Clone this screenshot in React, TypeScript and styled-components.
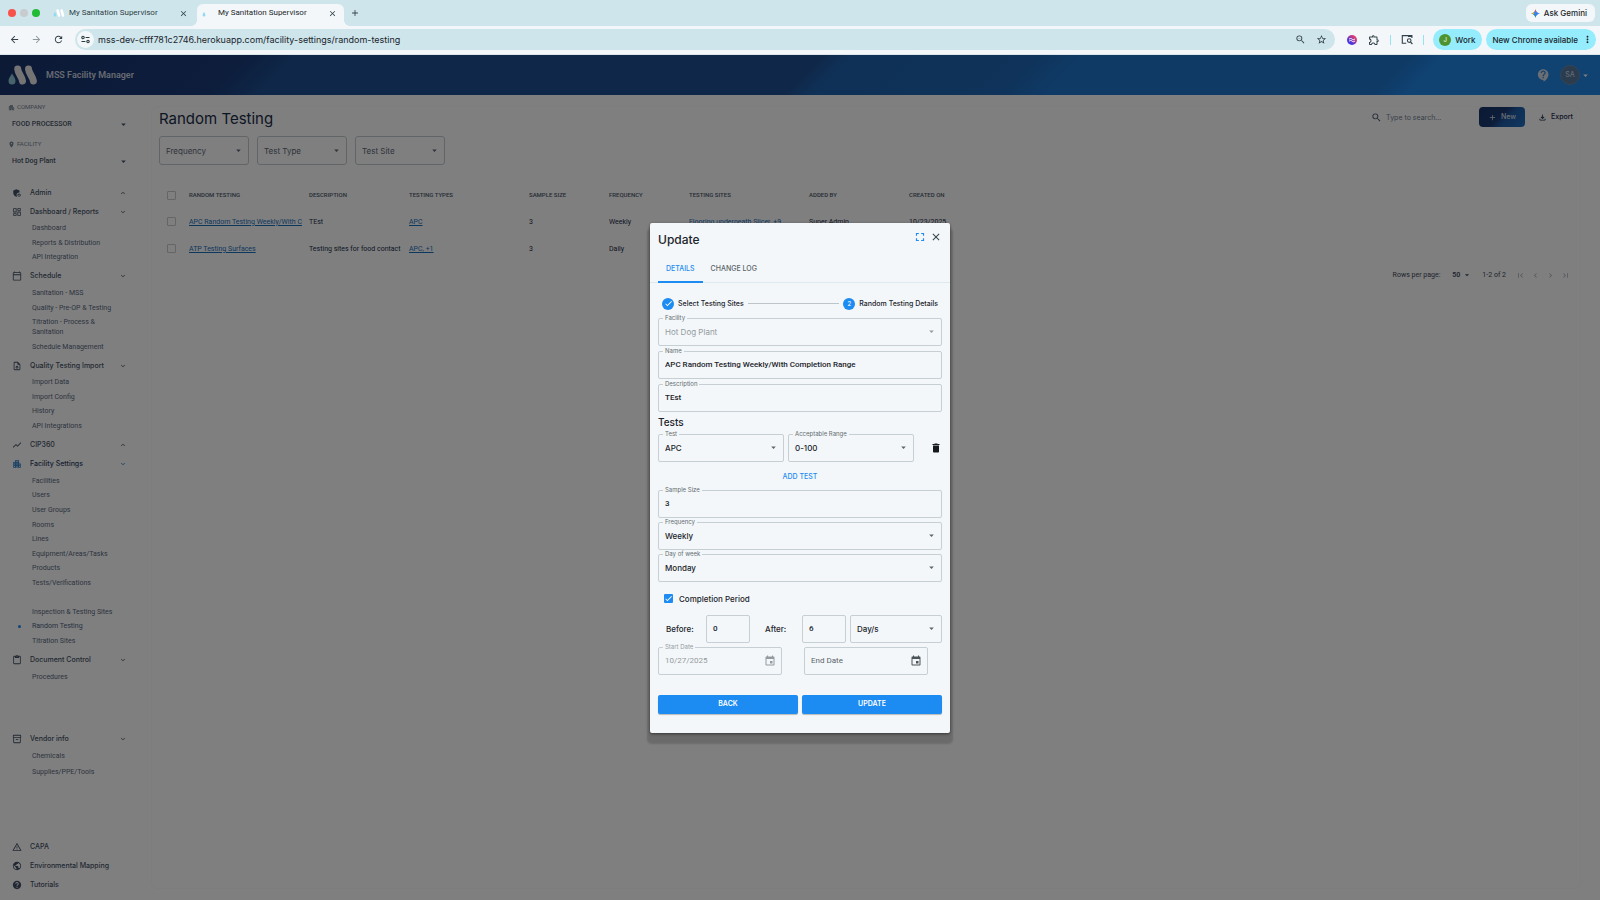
import React from "react";
import styled, { createGlobalStyle, css } from "styled-components";
import {
  MdAdminPanelSettings,
  MdAdd,
  MdApartment,
  MdArrowBack,
  MdArrowDropDown,
  MdArrowForward,
  MdCheck,
  MdChevronLeft,
  MdChevronRight,
  MdClose,
  MdContactSupport,
  MdContentPaste,
  MdDelete,
  MdEvent,
  MdFirstPage,
  MdFullscreen,
  MdHelp,
  MdKeyboardArrowDown,
  MdKeyboardArrowUp,
  MdLastPage,
  MdMoreVert,
  MdOutlineCalendarToday,
  MdOutlineDashboard,
  MdOutlineExtension,
  MdOutlineFileDownload,
  MdOutlineInventory2,
  MdOutlineUploadFile,
  MdPlace,
  MdPublic,
  MdRefresh,
  MdSearch,
  MdShowChart,
  MdStarBorder,
  MdWarningAmber,
  MdZoomOut,
} from "react-icons/md";

const blue = "#1c8bf2";
const paper = "#f3f7f9";
const tint = "#cde5eb";
const navy = "#1a2c48";
const slate = "#445266";

const Global = createGlobalStyle`
  *, *::before, *::after { box-sizing: border-box; }
  body { margin: 0; font-family: Inter, Roboto, sans-serif; font-size: 8px; line-height: 10px; color: #1c242b; background: #fff; }
  button, input, select { font: inherit; color: inherit; margin: 0; padding: 0; border: 0; background: none; }
  button { cursor: pointer; }
  ul { list-style: none; margin: 0; padding: 0; }
  h1, h2, h3, p { margin: 0; }
  a { color: inherit; text-decoration: none; }
  svg { display: block; flex: none; }
`;

const Page = styled.div`
  min-height: 100vh;
  display: flex;
  flex-direction: column;
`;

/* ---------- browser chrome ---------- */

const TabStrip = styled.header`
  height: 26px;
  display: flex;
  align-items: center;
  padding: 0 5px 0 8px;
  background: ${tint};
`;

const Lights = styled.div`
  display: flex;
  gap: 4px;
  margin-right: 4px;
`;

const Light = styled.span<{ $c: string }>`
  width: 8px;
  height: 8px;
  border-radius: 50%;
  background: ${(p) => p.$c};
`;

const Tab = styled.div<{ $active?: boolean }>`
  position: relative;
  width: 147px;
  height: 22px;
  margin: 4px 2px 0;
  padding: ${(p) => (p.$active ? "0 7px 4px 5px" : "0 5px 4px 7px")};
  display: flex;
  align-items: center;
  font-family: Roboto, sans-serif;
  color: #2f3e45;
  ${(p) =>
    p.$active &&
    css`
      background: ${paper};
      border-radius: 6px 6px 0 0;
      color: #1c262b;
      &::before,
      &::after {
        content: "";
        position: absolute;
        bottom: 0;
        width: 6px;
        height: 6px;
      }
      &::before {
        right: 100%;
        background: radial-gradient(circle at 0 0, transparent 6px, ${paper} 6px);
      }
      &::after {
        left: 100%;
        background: radial-gradient(circle at 100% 0, transparent 6px, ${paper} 6px);
      }
    `}
`;

const TabTitle = styled.span`
  flex: 1;
  margin-left: 4px;
`;

const IconButton = styled.button<{ $size?: number; $c?: string }>`
  display: inline-flex;
  align-items: center;
  justify-content: center;
  width: ${(p) => p.$size ?? 12}px;
  height: ${(p) => p.$size ?? 12}px;
  color: ${(p) => p.$c ?? "#33424a"};
  flex: none;
`;

const NewTab = styled(IconButton)`
  margin-left: 3px;
`;

const Gemini = styled.button`
  margin-left: auto;
  height: 18px;
  padding: 0 8px 0 5px;
  display: flex;
  align-items: center;
  gap: 4px;
  border-radius: 6px;
  background: ${paper};
  font-weight: 500;
`;

const Toolbar = styled.nav`
  height: 29px;
  display: flex;
  align-items: center;
  padding: 0 4px 1px 8px;
  background: ${paper};
  border-bottom: 1px solid #dbe6ea;
`;

const NavButtons = styled.div`
  display: flex;
  gap: 10px;
  margin-right: 11px;
`;

const Address = styled.div`
  flex: 1;
  height: 21px;
  padding: 0 8px 0 2px;
  display: flex;
  align-items: center;
  gap: 4px;
  border-radius: 11px;
  background: ${tint};
`;

const SiteInfo = styled(IconButton)`
  border-radius: 50%;
  background: ${paper};
`;

const Url = styled.input`
  flex: 1;
  min-width: 0;
  height: 17px;
  font-size: 9px;
  outline: 0;
`;

const AddressIcons = styled.div`
  display: flex;
  gap: 9px;
`;

const Extensions = styled.div`
  display: flex;
  align-items: center;
  gap: 10px;
  margin: 0 9px 0 11px;
`;

const Separator = styled.span`
  width: 1px;
  height: 10px;
  background: #94e3f5;
`;

const Pill = styled.button`
  height: 21px;
  display: flex;
  align-items: center;
  gap: 4px;
  padding: 0 3px 0 6px;
  margin-left: 4px;
  border-radius: 11px;
  background: #94ecfc;
  font-weight: 500;
  white-space: nowrap;
`;

const WorkPill = styled(Pill)`
  margin-left: 0;
  padding: 0 7px 0 6px;
`;

const Initial = styled.span`
  width: 12px;
  height: 12px;
  border-radius: 50%;
  background: #4d9430;
  color: #e6f2df;
  font-size: 6px;
  line-height: 12px;
`;

/* ---------- application frame ---------- */

const AppFrame = styled.div`
  position: relative;
  flex: 1;
  display: flex;
  flex-direction: column;
`;

const AppBar = styled.div`
  height: 40px;
  display: flex;
  align-items: center;
  padding: 0 9px 0 8px;
  color: #fff;
  background: linear-gradient(
    135deg,
    #18346c 0,
    #1a3a78 15%,
    #1e4e90 18%,
    #1e4e90 50%,
    #1e62ae 52%,
    #1e66b4 63%,
    #1e74ca 66%,
    #1e74ca 86%,
    #2084e4 88%
  );
`;

const AppName = styled.span`
  flex: 1;
  margin-left: 8px;
  font-family: Roboto, sans-serif;
  font-size: 9px;
  line-height: 12px;
  font-weight: 600;
  color: #ccd4e0;
`;

const Avatar = styled.span`
  width: 20px;
  height: 20px;
  margin-left: 10px;
  border-radius: 50%;
  background: #55789c;
  border: 1px solid #6489ab;
  color: #c5d5e4;
  font-size: 7px;
  font-weight: 500;
  line-height: 18px;
  text-align: center;
`;

const Columns = styled.div`
  flex: 1;
  display: flex;
`;

const Sidebar = styled.aside`
  width: 140px;
  flex: none;
  display: flex;
  flex-direction: column;
  padding: 7px 7px 5px;
  color: ${slate};
`;

const Picker = styled.div`
  display: flex;
  flex-direction: column;
  gap: 1px;
  height: 37px;
`;

const PickerLabel = styled.label`
  display: flex;
  align-items: center;
  gap: 2px;
  height: 10px;
  padding-left: 1px;
  font-family: Roboto, sans-serif;
  font-size: 6px;
  text-transform: uppercase;
  color: #748294;
`;

const SelectBox = styled.div`
  position: relative;
  display: flex;
  align-items: center;
  width: 100%;
  height: 100%;
  svg {
    position: absolute;
    right: 4px;
    pointer-events: none;
  }
`;

const NativeSelect = styled.select`
  appearance: none;
  width: 100%;
  height: 100%;
  outline: 0;
  opacity: 1;
`;

const PickerSelect = styled(SelectBox)`
  height: 22px;
  font-family: Roboto, sans-serif;
  font-size: 7px;
  font-weight: 500;
  select {
    padding-left: 5px;
  }
`;

const Menu = styled.ul`
  flex: 1;
  display: flex;
  flex-direction: column;
  margin-top: 7px;
`;

const Group = styled.li<{ $grow: number }>`
  flex: ${(p) => p.$grow} 0 auto;
  display: flex;
  flex-direction: column;
  padding-right: 6px;
`;

const GroupHead = styled.button<{ $active?: boolean }>`
  height: 19px;
  display: flex;
  align-items: center;
  gap: 8px;
  padding: 0 0 0 5px;
  font-size: 7px;
  font-weight: 500;
  text-align: left;
  color: ${(p) => (p.$active ? "#2d4263" : slate)};
  svg {
    color: ${(p) => (p.$active ? "#2b7cc8" : slate)};
  }
`;

const GroupTitle = styled.span`
  flex: 1;
`;

const SubList = styled.ul`
  flex: 1;
  display: flex;
  flex-direction: column;
  padding: 0 0 2px;
`;

const SubItem = styled.li<{ $current?: boolean }>`
  position: relative;
  flex: 1 0 auto;
  min-height: 14px;
  display: flex;
  align-items: center;
  padding: 2px 0 2px 25px;
  max-width: 116px;
  font-family: Roboto, sans-serif;
  font-size: 7px;
  color: ${(p) => (p.$current ? "#4a6284" : "#5a6a7e")};
  ${(p) =>
    p.$current &&
    css`
      &::before {
        content: "";
        position: absolute;
        left: 11px;
        width: 3px;
        height: 3px;
        border-radius: 50%;
        background: ${blue};
      }
    `}
`;

/* ---------- random testing page ---------- */

const Main = styled.main`
  flex: 1;
  min-width: 0;
  display: flex;
  padding: 11px 19px 11px 11px;
`;

const Card = styled.section`
  flex: 1;
  min-width: 0;
  padding: 0 0 0 7px;
  border: 1px solid #fafafa;
  border-radius: 6px;
  color: ${navy};
`;

const CardHead = styled.div`
  height: 24px;
  display: flex;
  align-items: flex-start;
`;

const Title = styled.h1`
  flex: 1;
  font-size: 15px;
  line-height: 24px;
  font-weight: 400;
`;

const Search = styled.label`
  width: 102px;
  height: 20px;
  display: flex;
  align-items: center;
  gap: 4px;
  color: ${slate};
  input {
    width: 84px;
    height: 16px;
    font-size: 7px;
    outline: 0;
  }
  input::placeholder {
    color: #748294;
    opacity: 1;
  }
`;

const HeadButton = styled.button<{ $primary?: boolean }>`
  height: 20px;
  min-width: 46px;
  margin-left: 6px;
  padding: 0 7px;
  display: flex;
  align-items: center;
  justify-content: center;
  gap: 4px;
  border-radius: 4px;
  font-size: 7px;
  font-weight: 500;
  ${(p) =>
    p.$primary &&
    css`
      color: #d8dde6;
      background: linear-gradient(135deg, #173466 0, #1a3a72 45%, #1e5aa4 60%, #2070c4 100%);
    `}
`;

const Filters = styled.div`
  display: flex;
  gap: 8px;
  margin-top: 5px;
`;

const FilterSelect = styled(SelectBox)`
  width: 90px;
  height: 29px;
  border: 1px solid #c4cad1;
  border-radius: 3px;
  color: #5d6876;
  select {
    padding-left: 6px;
  }
`;

const Table = styled.table`
  width: 100%;
  margin-top: 17px;
  table-layout: fixed;
  border-collapse: collapse;
  font-family: Roboto, sans-serif;
  font-size: 7px;
  text-align: left;
  th,
  td {
    height: 27px;
    padding: 0 4px;
    overflow: hidden;
    white-space: nowrap;
  }
  th {
    height: 26px;
    font-size: 6px;
    font-weight: 500;
    text-transform: uppercase;
    color: #4d5a6c;
  }
`;

const Link = styled.a`
  color: #1a70bc;
  text-decoration: underline;
`;

const RowCheck = styled.input`
  appearance: none;
  display: block;
  width: 9px;
  height: 9px;
  margin-left: 4px;
  border: 1px solid #c6cacf;
  border-radius: 1px;
`;

const Pagination = styled.div`
  height: 26px;
  display: flex;
  align-items: center;
  justify-content: flex-end;
  padding-right: 10px;
  font-family: Roboto, sans-serif;
  font-size: 7px;
  color: #3c4858;
`;

const PageSize = styled.label`
  display: flex;
  align-items: center;
  gap: 12px;
  margin-right: 10px;
`;

const PageSizeSelect = styled(SelectBox)`
  width: 20px;
  height: 12px;
  font-weight: 600;
  svg {
    right: 0;
  }
`;

const Pager = styled.div`
  display: flex;
  gap: 5px;
  margin-left: 9px;
`;

/* ---------- dialog ---------- */

const Backdrop = styled.div`
  position: absolute;
  inset: 0;
  display: flex;
  align-items: center;
  justify-content: center;
  background: rgba(0, 0, 0, 0.5);
`;

const Dialog = styled.div`
  width: 300px;
  padding-bottom: 19px;
  border-radius: 2px;
  background: ${paper};
  box-shadow: 0 1px 3px rgba(0, 0, 0, 0.5), 0 8px 2px 3px rgba(0, 0, 0, 0.16);
`;

const DialogHead = styled.div`
  height: 33px;
  display: flex;
  align-items: center;
  padding: 1px 8px 0;
`;

const HeadIcons = styled.div`
  align-self: flex-start;
  display: flex;
  gap: 4px;
  padding-top: 7px;
`;

const DialogTitle = styled.h2`
  flex: 1;
  font-size: 12px;
  line-height: 16px;
  font-weight: 500;
`;

const Tabs = styled.div`
  height: 27px;
  display: flex;
  padding: 0 8px;
  border-bottom: 1px solid #dde8ef;
`;

const TabButton = styled.button<{ $active?: boolean }>`
  height: 27px;
  padding: 0 8px;
  font-size: 7px;
  font-weight: 500;
  color: ${(p) => (p.$active ? blue : "#5b6469")};
  border-bottom: 2px solid ${(p) => (p.$active ? blue : "transparent")};
  border-top: 2px solid transparent;
`;

const Form = styled.form`
  display: flex;
  flex-direction: column;
  padding: 11px 8px 0;
`;

const Stepper = styled.ol`
  height: 20px;
  display: flex;
  align-items: center;
  gap: 4px;
  margin: 0 0 4px;
  padding: 0 4px;
  list-style: none;
  font-size: 7px;
  font-weight: 500;
`;

const Step = styled.li`
  display: flex;
  align-items: center;
  gap: 4px;
`;

const StepDot = styled.span`
  width: 12px;
  height: 12px;
  display: flex;
  align-items: center;
  justify-content: center;
  border-radius: 50%;
  background: ${blue};
  color: #fff;
  font-size: 6px;
`;

const StepLine = styled.li`
  flex: 1;
  height: 1px;
  background: #bcc6ca;
`;

const Fields = styled.div<{ $gap?: number }>`
  display: flex;
  flex-direction: column;
  gap: ${(p) => p.$gap ?? 4}px;
`;

const Outlined = styled.div<{ $muted?: boolean; $width?: number }>`
  position: relative;
  height: 28px;
  width: ${(p) => (p.$width ? `${p.$width}px` : "100%")};
  display: flex;
  align-items: center;
  border: 1px solid #c6d0d4;
  border-radius: 2px;
  color: ${(p) => (p.$muted ? "#939b9f" : "inherit")};
  input,
  select {
    flex: 1;
    min-width: 0;
    width: 100%;
    height: 26px;
    padding-left: 6px;
    outline: 0;
    font-weight: ${(p) => (p.$muted ? 400 : 500)};
  }
  input {
    font-family: Roboto, sans-serif;
  }
  input::placeholder {
    color: #5b6469;
    opacity: 1;
    font-weight: 400;
  }
  > button {
    margin-right: 5px;
  }
`;

const FloatingLabel = styled.label<{ $muted?: boolean }>`
  position: absolute;
  top: -5px;
  left: 4px;
  padding: 0 2px;
  background: ${paper};
  font-size: 6px;
  font-weight: 400;
  line-height: 8px;
  color: ${(p) => (p.$muted ? "#939b9f" : "#636c70")};
`;

const SectionTitle = styled.h3`
  font-size: 10px;
  line-height: 14px;
  font-weight: 500;
  margin: 3px 0 5px;
`;

const Row = styled.div<{ $gap?: number }>`
  display: flex;
  align-items: center;
  gap: ${(p) => p.$gap ?? 4}px;
`;

const DeleteButton = styled(IconButton)`
  margin: 0 0 0 auto;
`;

const AddTest = styled.button`
  align-self: center;
  height: 18px;
  margin: 6px 0 4px;
  padding: 0 6px;
  font-size: 7px;
  font-weight: 500;
  color: ${blue};
`;

const CheckLabel = styled.label`
  display: flex;
  align-items: center;
  gap: 6px;
  height: 16px;
  margin: 9px 0 8px;
  padding-left: 6px;
  font-weight: 500;
`;

const CheckBox = styled.span`
  position: relative;
  width: 9px;
  height: 9px;
  input {
    appearance: none;
    display: block;
    width: 9px;
    height: 9px;
    border-radius: 1px;
    background: ${blue};
  }
  svg {
    position: absolute;
    inset: 0;
    color: #fff;
    pointer-events: none;
  }
`;

const InlineLabel = styled.label`
  width: 48px;
  padding-left: 8px;
  font-weight: 500;
  & + div + & {
    width: 52px;
    padding-left: 15px;
  }
`;

const UnitCell = styled.div`
  flex: 1;
  margin-left: 4px;
`;

const Actions = styled.div`
  display: flex;
  gap: 4px;
  margin-top: 20px;
`;

const ActionButton = styled.button`
  flex: 1;
  height: 19px;
  border-radius: 2px;
  background: ${blue};
  color: #fff;
  font-size: 7px;
  font-weight: 600;
  box-shadow: 0 1px 1px rgba(0, 0, 0, 0.25);
`;

/* ---------- drawings ---------- */

const Logo = () => (
  <svg width="30" height="22" viewBox="0 0 30 22" aria-hidden="true">
    <path d="M4 9.500 C5.500 12.500 7.500 14.300 7.500 17 A3.500 3.500 0 0 1 .5 17 C.5 14.300 2.500 12.500 4 9.500Z" fill="#8fc6d8" />
    <path d="M9.700 5.100 C10 9.500 14 12.500 14.500 17" stroke="#e8e8e8" strokeWidth="7" strokeLinecap="round" fill="none" />
    <path d="M20.500 5.100 C20.800 9.500 24.800 12.500 25.400 17" stroke="#e8e8e8" strokeWidth="7" strokeLinecap="round" fill="none" />
  </svg>
);

const Favicon = ({ loading }: { loading?: boolean }) => (
  <svg width="12" height="10" viewBox="0 0 12 10" aria-hidden="true">
    <path d="M2 4 C2.600 5 3.400 6 3.400 7.200 A1.400 1.400 0 0 1 .6 7.200 C.6 6 1.400 5 2 4Z" fill="#8fdcf2" />
    {!loading && (
      <g stroke="#fff" strokeWidth="2.600" strokeLinecap="round">
        <path d="M4.600 2.500 6 7.500" />
        <path d="M8.600 2.500 10 7.500" />
      </g>
    )}
  </svg>
);

const Spark = () => (
  <svg width="9" height="9" viewBox="0 0 10 10" aria-hidden="true">
    <defs>
      <linearGradient id="spark" x1="0.500" y1="0" x2="0.500" y2="1">
        <stop offset="0.100" stopColor="#ef4d43" />
        <stop offset="0.400" stopColor="#3b82f0" />
        <stop offset="0.700" stopColor="#2f7cf0" />
        <stop offset="1" stopColor="#34a853" />
      </linearGradient>
    </defs>
    <path d="M5 0 C5.600 2.800 7.200 4.400 10 5 C7.200 5.600 5.600 7.200 5 10 C4.400 7.200 2.800 5.600 0 5 C2.800 4.400 4.400 2.800 5 0Z" fill="url(#spark)" />
    <path d="M0 5 C2.800 5.600 4.400 7.200 5 10 L4 6Z" fill="#34a853" />
    <path d="M0 5 C1.500 4.700 2.600 4.200 3.400 3.400 L3.600 5.600Z" fill="#f4b400" />
  </svg>
);

const Tune = () => (
  <svg width="9" height="9" viewBox="0 0 9 9" fill="none" stroke="#2c3a40" strokeWidth="1.100" aria-hidden="true">
    <circle cx="2" cy="2.500" r="1.200" />
    <path d="M4.600 2.500H8.500M.5 6.500H4.400" />
    <circle cx="7" cy="6.500" r="1.200" />
  </svg>
);

const SwirlIcon = () => (
  <svg width="10" height="10" viewBox="0 0 10 10" aria-hidden="true">
    <defs>
      <linearGradient id="swirl" x1="0" y1="1" x2="1" y2="0">
        <stop offset="0.300" stopColor="#4a35e0" />
        <stop offset="0.800" stopColor="#e2416f" />
      </linearGradient>
    </defs>
    <circle cx="5" cy="5" r="5" fill="url(#swirl)" />
    <path d="M2 4.300 C3 3.300 4 3.300 5 4.100 S7 4.900 8 3.900 M2 6.300 C3 5.300 4 5.300 5 6.100 S7 6.900 8 5.900" stroke="#fff" strokeWidth="1" fill="none" />
  </svg>
);

const PanelSearch = () => (
  <svg width="12" height="11" viewBox="0 0 12 11" fill="none" stroke="#33424a" strokeWidth="1.100" aria-hidden="true">
    <path d="M5.200 9.300H1.300V1.600H10.900V4" />
    <path d="M7 2.200H10.900" strokeWidth="1.600" />
    <circle cx="8.200" cy="6.600" r="1.800" />
    <path d="M9.500 8 11.400 10" />
  </svg>
);

/* ---------- data ---------- */

type GroupData = {
  title: string;
  icon: React.ReactNode;
  subs?: (string | null)[];
  arrow?: "up" | "down";
  active?: boolean;
};

const groups: GroupData[] = [
  { title: "Admin", icon: <MdAdminPanelSettings size={10} />, arrow: "up" },
  {
    title: "Dashboard / Reports",
    icon: <MdOutlineDashboard size={10} />,
    arrow: "down",
    subs: ["Dashboard", "Reports & Distribution", "API Integration"],
  },
  {
    title: "Schedule",
    icon: <MdOutlineCalendarToday size={10} />,
    arrow: "down",
    subs: ["Sanitation - MSS", "Quality - Pre-OP & Testing", "Titration - Process & Sanitation", "Schedule Management"],
  },
  {
    title: "Quality Testing Import",
    icon: <MdOutlineUploadFile size={10} />,
    arrow: "down",
    subs: ["Import Data", "Import Config", "History", "API Integrations"],
  },
  { title: "CIP360", icon: <MdShowChart size={10} />, arrow: "up" },
  {
    title: "Facility Settings",
    icon: <MdApartment size={10} />,
    arrow: "down",
    active: true,
    subs: [
      "Facilities",
      "Users",
      "User Groups",
      "Rooms",
      "Lines",
      "Equipment/Areas/Tasks",
      "Products",
      "Tests/Verifications",
      null,
      "Inspection & Testing Sites",
      "Random Testing",
      "Titration Sites",
    ],
  },
  {
    title: "Document Control",
    icon: <MdContentPaste size={10} />,
    arrow: "down",
    subs: ["Procedures", null, null, null],
  },
  {
    title: "Vendor info",
    icon: <MdOutlineInventory2 size={10} />,
    arrow: "down",
    subs: ["Chemicals", "Supplies/PPE/Tools", null, null, null, null],
  },
  { title: "CAPA", icon: <MdWarningAmber size={10} /> },
  { title: "Environmental Mapping", icon: <MdPublic size={10} /> },
  { title: "Tutorials", icon: <MdHelp size={10} /> },
];

const columns: [string, number][] = [
  ["Random Testing", 120],
  ["Description", 100],
  ["Testing Types", 120],
  ["Sample Size", 80],
  ["Frequency", 80],
  ["Testing Sites", 120],
  ["Added by", 100],
];

const rows = [
  {
    name: "APC Random Testing Weekly/With C",
    description: "TEst",
    types: "APC",
    size: "3",
    frequency: "Weekly",
    sites: "Flooring underneath Slicer, +9",
    by: "Super Admin",
    on: "10/23/2025",
  },
  {
    name: "ATP Testing Surfaces",
    description: "Testing sites for food contact",
    types: "APC, +1",
    size: "3",
    frequency: "Daily",
    sites: "",
    by: "",
    on: "",
  },
];

/* ---------- pieces ---------- */

type FieldProps = {
  id: string;
  label?: string;
  name?: string;
  value: string;
  muted?: boolean;
  width?: number;
};

const TextField = ({ id, label, name, value, muted, width }: FieldProps) => (
  <Outlined $muted={muted} $width={width}>
    {label && <FloatingLabel htmlFor={id}>{label}</FloatingLabel>}
    <input id={id} aria-label={name} defaultValue={value} />
  </Outlined>
);

const SelectField = ({ id, label, name, value, muted, width }: FieldProps) => (
  <Outlined $muted={muted} $width={width}>
    {label && <FloatingLabel htmlFor={id}>{label}</FloatingLabel>}
    <SelectBox>
      <NativeSelect id={id} aria-label={name} disabled={muted}>
        <option>{value}</option>
      </NativeSelect>
      <MdArrowDropDown size={11} color={muted ? "#939b9f" : "#5b6469"} />
    </SelectBox>
  </Outlined>
);

const SidebarPicker = ({ id, label, value, icon }: { id: string; label: string; value: string; icon: React.ReactNode }) => (
  <Picker>
    <PickerLabel htmlFor={id}>
      {icon}
      {label}
    </PickerLabel>
    <PickerSelect>
      <NativeSelect id={id}>
        <option>{value}</option>
      </NativeSelect>
      <MdArrowDropDown size={11} />
    </PickerSelect>
  </Picker>
);

const BrowserChrome = () => (
  <>
    <TabStrip>
      <Lights>
        <Light $c="#f8524a" />
        <Light $c="#c9ccce" />
        <Light $c="#22bb35" />
      </Lights>
      <Tab>
        <Favicon />
        <TabTitle>My Sanitation Supervisor</TabTitle>
        <IconButton $size={10} aria-label="Close tab">
          <MdClose size={9} />
        </IconButton>
      </Tab>
      <Tab $active>
        <Favicon loading />
        <TabTitle>My Sanitation Supervisor</TabTitle>
        <IconButton $size={10} aria-label="Close tab">
          <MdClose size={9} />
        </IconButton>
      </Tab>
      <NewTab aria-label="New tab">
        <MdAdd size={10} />
      </NewTab>
      <Gemini>
        <Spark />
        Ask Gemini
      </Gemini>
    </TabStrip>
    <Toolbar>
      <NavButtons>
        <IconButton aria-label="Back">
          <MdArrowBack size={11} />
        </IconButton>
        <IconButton aria-label="Forward" $c="#8e989d">
          <MdArrowForward size={11} />
        </IconButton>
        <IconButton aria-label="Reload">
          <MdRefresh size={11} />
        </IconButton>
      </NavButtons>
      <Address>
        <SiteInfo $size={17} aria-label="Site information">
          <Tune />
        </SiteInfo>
        <Url aria-label="Address" defaultValue="mss-dev-cfff781c2746.herokuapp.com/facility-settings/random-testing" />
        <AddressIcons>
          <IconButton aria-label="Zoom">
            <MdZoomOut size={11} />
          </IconButton>
          <IconButton aria-label="Bookmark">
            <MdStarBorder size={11} />
          </IconButton>
        </AddressIcons>
      </Address>
      <Extensions>
        <IconButton aria-label="Extension">
          <SwirlIcon />
        </IconButton>
        <IconButton aria-label="Extensions">
          <MdOutlineExtension size={12} />
        </IconButton>
        <Separator />
        <IconButton aria-label="Side panel">
          <PanelSearch />
        </IconButton>
        <Separator />
      </Extensions>
      <WorkPill>
        <Initial>J</Initial>
        Work
      </WorkPill>
      <Pill>
        New Chrome available
        <MdMoreVert size={11} />
      </Pill>
    </Toolbar>
  </>
);

const SidebarMenu = () => (
  <Menu>
    {groups.map((g) => (
      <Group key={g.title} $grow={g.subs ? g.subs.length : 0}>
        <GroupHead $active={g.active}>
          {g.icon}
          <GroupTitle>{g.title}</GroupTitle>
          {g.arrow === "up" && <MdKeyboardArrowUp size={8} />}
          {g.arrow === "down" && <MdKeyboardArrowDown size={8} />}
        </GroupHead>
        {g.subs && (
          <SubList>
            {g.subs.map((s, i) => (
              <SubItem key={i} $current={s === "Random Testing"}>
                {s && <a href="#">{s}</a>}
              </SubItem>
            ))}
          </SubList>
        )}
      </Group>
    ))}
  </Menu>
);

const TestingTable = () => (
  <Table>
    <colgroup>
      <col width={26} />
      {columns.map(([c, w]) => (
        <col key={c} width={w} />
      ))}
      <col />
    </colgroup>
    <thead>
      <tr>
        <th>
          <RowCheck type="checkbox" aria-label="Select all" />
        </th>
        {columns.map(([c]) => (
          <th key={c}>{c}</th>
        ))}
        <th>Created on</th>
      </tr>
    </thead>
    <tbody>
      {rows.map((r) => (
        <tr key={r.name}>
          <td>
            <RowCheck type="checkbox" aria-label={`Select ${r.name}`} />
          </td>
          <td>
            <Link href="#">{r.name}</Link>
          </td>
          <td>{r.description}</td>
          <td>
            <Link href="#">{r.types}</Link>
          </td>
          <td>{r.size}</td>
          <td>{r.frequency}</td>
          <td>{r.sites && <Link href="#">{r.sites}</Link>}</td>
          <td>{r.by}</td>
          <td>{r.on}</td>
        </tr>
      ))}
    </tbody>
  </Table>
);

const UpdateDialog = () => (
  <Dialog role="dialog" aria-labelledby="dialog-title">
    <DialogHead>
      <DialogTitle id="dialog-title">Update</DialogTitle>
      <HeadIcons>
        <IconButton aria-label="Full screen" $c={blue}>
          <MdFullscreen size={14} />
        </IconButton>
        <IconButton aria-label="Close">
          <MdClose size={12} />
        </IconButton>
      </HeadIcons>
    </DialogHead>
    <Tabs role="tablist">
      <TabButton role="tab" aria-selected $active>
        DETAILS
      </TabButton>
      <TabButton role="tab">CHANGE LOG</TabButton>
    </Tabs>
    <Form onSubmit={(e) => e.preventDefault()}>
      <Stepper>
        <Step>
          <StepDot>
            <MdCheck size={9} />
          </StepDot>
          Select Testing Sites
        </Step>
        <StepLine aria-hidden="true" />
        <Step>
          <StepDot>2</StepDot>
          Random Testing Details
        </Step>
      </Stepper>
      <Fields $gap={5}>
        <SelectField id="facility" label="Facility" value="Hot Dog Plant" muted />
        <TextField id="name" label="Name" value="APC Random Testing Weekly/With Completion Range" />
        <TextField id="description" label="Description" value="TEst" />
      </Fields>
      <SectionTitle>Tests</SectionTitle>
      <Row>
        <SelectField id="test" label="Test" value="APC" width={126} />
        <SelectField id="range" label="Acceptable Range" value="0-100" width={126} />
        <DeleteButton aria-label="Delete test" $c="#15191c">
          <MdDelete size={12} />
        </DeleteButton>
      </Row>
      <AddTest type="button">ADD TEST</AddTest>
      <Fields>
        <TextField id="sample" label="Sample Size" value="3" />
        <SelectField id="frequency" label="Frequency" value="Weekly" />
        <SelectField id="day" label="Day of week" value="Monday" />
      </Fields>
      <CheckLabel>
        <CheckBox>
          <input type="checkbox" defaultChecked />
          <MdCheck size={9} />
        </CheckBox>
        Completion Period
      </CheckLabel>
      <Fields>
        <Row $gap={0}>
          <InlineLabel htmlFor="before">Before:</InlineLabel>
          <TextField id="before" value="0" width={44} />
          <InlineLabel htmlFor="after">After:</InlineLabel>
          <TextField id="after" value="6" width={44} />
          <UnitCell>
            <SelectField id="unit" name="Unit" value="Day/s" />
          </UnitCell>
        </Row>
        <Row $gap={22}>
          <Outlined $muted $width={124}>
            <FloatingLabel htmlFor="start" $muted>
              Start Date
            </FloatingLabel>
            <input id="start" defaultValue="10/27/2025" disabled />
            <IconButton type="button" aria-label="Pick start date" $c="#939b9f">
              <MdEvent size={12} />
            </IconButton>
          </Outlined>
          <Outlined $width={124}>
            <input aria-label="End Date" placeholder="End Date" />
            <IconButton type="button" aria-label="Pick end date" $c="#4c5559">
              <MdEvent size={12} />
            </IconButton>
          </Outlined>
        </Row>
      </Fields>
      <Actions>
        <ActionButton type="button">BACK</ActionButton>
        <ActionButton type="submit">UPDATE</ActionButton>
      </Actions>
    </Form>
  </Dialog>
);

export default function App() {
  return (
    <Page>
      <Global />
      <BrowserChrome />
      <AppFrame>
        <AppBar>
          <Logo />
          <AppName>MSS Facility Manager</AppName>
          <IconButton $size={14} $c="#d6dce4" aria-label="Help">
            <MdContactSupport size={15} />
          </IconButton>
          <Avatar>SA</Avatar>
          <MdArrowDropDown size={11} />
        </AppBar>
        <Columns>
          <Sidebar>
            <SidebarPicker id="company" label="Company" value="FOOD PROCESSOR" icon={<MdApartment size={7} />} />
            <SidebarPicker id="plant" label="Facility" value="Hot Dog Plant" icon={<MdPlace size={7} />} />
            <SidebarMenu />
          </Sidebar>
          <Main>
            <Card>
              <CardHead>
                <Title>Random Testing</Title>
                <Search>
                  <MdSearch size={11} />
                  <input type="search" aria-label="Search" placeholder="Type to search..." />
                </Search>
                <HeadButton $primary>
                  <MdAdd size={9} />
                  New
                </HeadButton>
                <HeadButton>
                  <MdOutlineFileDownload size={9} />
                  Export
                </HeadButton>
              </CardHead>
              <Filters>
                {["Frequency", "Test Type", "Test Site"].map((f) => (
                  <FilterSelect key={f}>
                    <NativeSelect aria-label={f}>
                      <option>{f}</option>
                    </NativeSelect>
                    <MdArrowDropDown size={11} />
                  </FilterSelect>
                ))}
              </Filters>
              <TestingTable />
              <Pagination>
                <PageSize>
                  Rows per page:
                  <PageSizeSelect>
                    <NativeSelect>
                      <option>50</option>
                    </NativeSelect>
                    <MdArrowDropDown size={10} />
                  </PageSizeSelect>
                </PageSize>
                1-2 of 2
                <Pager>
                  <IconButton $size={10} $c="#a3abb5" aria-label="First page">
                    <MdFirstPage size={9} />
                  </IconButton>
                  <IconButton $size={10} $c="#a3abb5" aria-label="Previous page">
                    <MdChevronLeft size={9} />
                  </IconButton>
                  <IconButton $size={10} $c="#a3abb5" aria-label="Next page">
                    <MdChevronRight size={9} />
                  </IconButton>
                  <IconButton $size={10} $c="#a3abb5" aria-label="Last page">
                    <MdLastPage size={9} />
                  </IconButton>
                </Pager>
              </Pagination>
            </Card>
          </Main>
        </Columns>
        <Backdrop>
          <UpdateDialog />
        </Backdrop>
      </AppFrame>
    </Page>
  );
}
